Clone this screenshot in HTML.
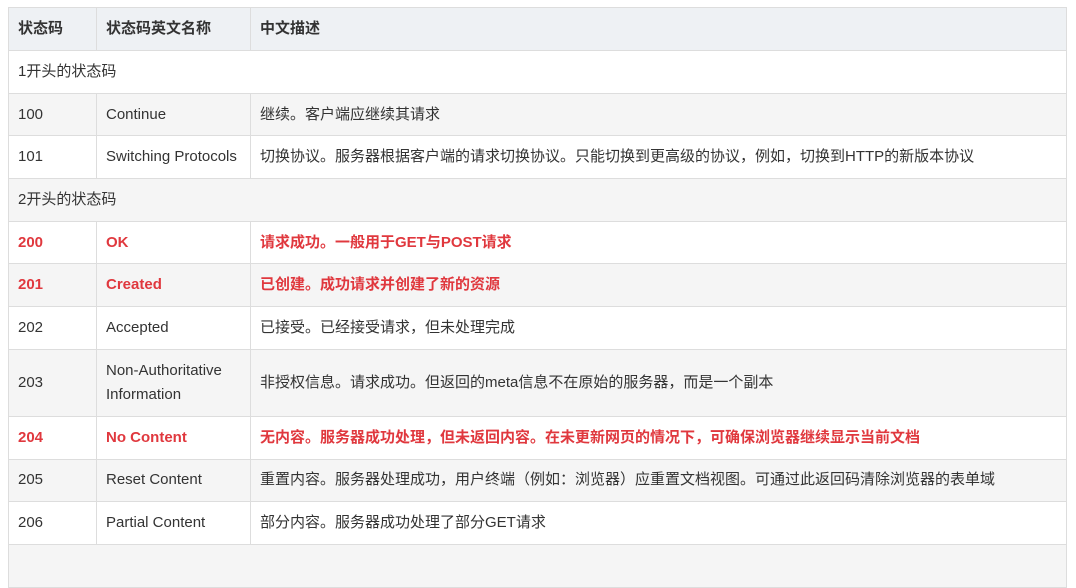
<!DOCTYPE html>
<html><head><meta charset="utf-8"><style>
body{margin:0;background:#fff;font-family:"Liberation Sans","Noto Sans CJK SC",sans-serif;font-size:15px;color:#333;}
table{position:absolute;left:8px;top:7px;border-collapse:collapse;width:1059px;table-layout:fixed;}
td,th{border:1px solid #ddd;padding:0 0 0 9px;text-align:left;height:41.7px;line-height:24px;}
th{background:#eef1f4;font-weight:bold;}
tr.g td{background:#f5f5f5;}
tr.r td{color:#e0383e;font-weight:bold;}
</style></head><body>
<table>
<colgroup><col style="width:88px"><col style="width:154px"><col></colgroup>
<tr><th style="height:42px">状态码</th><th>状态码英文名称</th><th>中文描述</th></tr>
<tr><td colspan="3">1开头的状态码</td></tr>
<tr class="g"><td>100</td><td>Continue</td><td>继续。客户端应继续其请求</td></tr>
<tr><td>101</td><td>Switching Protocols</td><td>切换协议。服务器根据客户端的请求切换协议。只能切换到更高级的协议，例如，切换到HTTP的新版本协议</td></tr>
<tr class="g"><td colspan="3">2开头的状态码</td></tr>
<tr class="r"><td>200</td><td>OK</td><td>请求成功。一般用于GET与POST请求</td></tr>
<tr class="g r"><td>201</td><td>Created</td><td>已创建。成功请求并创建了新的资源</td></tr>
<tr><td>202</td><td>Accepted</td><td>已接受。已经接受请求，但未处理完成</td></tr>
<tr class="g"><td style="height:66px">203</td><td>Non-Authoritative Information</td><td>非授权信息。请求成功。但返回的meta信息不在原始的服务器，而是一个副本</td></tr>
<tr class="r"><td>204</td><td>No Content</td><td>无内容。服务器成功处理，但未返回内容。在未更新网页的情况下，可确保浏览器继续显示当前文档</td></tr>
<tr class="g"><td>205</td><td>Reset Content</td><td>重置内容。服务器处理成功，用户终端（例如：浏览器）应重置文档视图。可通过此返回码清除浏览器的表单域</td></tr>
<tr><td>206</td><td>Partial Content</td><td>部分内容。服务器成功处理了部分GET请求</td></tr>
<tr class="g"><td colspan="3">&nbsp;</td></tr>
</table>
</body></html>
